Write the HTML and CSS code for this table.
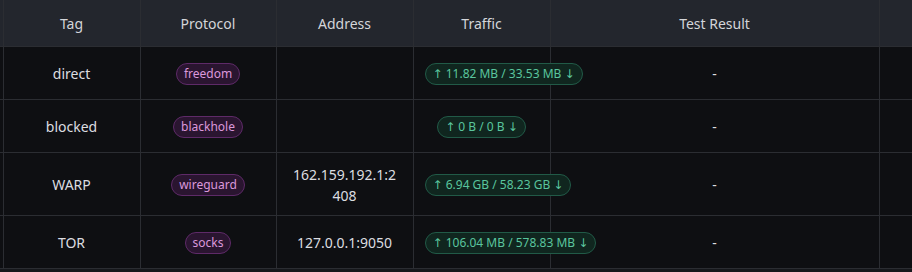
FILE: index.html
```html
<!DOCTYPE html>
<html lang="en">
<head>
<meta charset="utf-8">
<title>Outbounds</title>
<link rel="stylesheet" href="styles.css">
</head>
<body>
<div class="table-wrap">
  <table class="outbounds">
    <colgroup>
      <col class="c-edge">
      <col class="c-tag">
      <col class="c-proto">
      <col class="c-addr">
      <col class="c-traffic">
      <col class="c-test">
      <col class="c-more">
    </colgroup>
    <thead>
      <tr>
        <th></th>
        <th>Tag</th>
        <th>Protocol</th>
        <th>Address</th>
        <th>Traffic</th>
        <th>Test Result</th>
        <th></th>
      </tr>
    </thead>
    <tbody>
      <tr>
        <td></td>
        <td>direct</td>
        <td><span class="tag tag-purple">freedom</span></td>
        <td class="addr"></td>
        <td><span class="tag tag-green"><span class="arrow">↑</span> 11.82 MB / 33.53 MB <span class="arrow">↓</span></span></td>
        <td>-</td>
        <td></td>
      </tr>
      <tr>
        <td></td>
        <td>blocked</td>
        <td><span class="tag tag-purple">blackhole</span></td>
        <td class="addr"></td>
        <td><span class="tag tag-green"><span class="arrow">↑</span> 0 B / 0 B <span class="arrow">↓</span></span></td>
        <td>-</td>
        <td></td>
      </tr>
      <tr>
        <td></td>
        <td>WARP</td>
        <td><span class="tag tag-purple">wireguard</span></td>
        <td class="addr">162.159.192.1:2408</td>
        <td><span class="tag tag-green"><span class="arrow">↑</span> 6.94 GB / 58.23 GB <span class="arrow">↓</span></span></td>
        <td>-</td>
        <td></td>
      </tr>
      <tr>
        <td></td>
        <td>TOR</td>
        <td><span class="tag tag-purple">socks</span></td>
        <td class="addr">127.0.0.1:9050</td>
        <td><span class="tag tag-green"><span class="arrow">↑</span> 106.04 MB / 578.83 MB <span class="arrow">↓</span></span></td>
        <td>-</td>
        <td></td>
      </tr>
    </tbody>
  </table>
</div>
</body>
</html>
```

FILE: styles.css
```css
html, body {
  margin: 0;
  padding: 0;
  background: #16181c;
  font-family: "Noto Sans", "Open Sans", sans-serif;
  font-size: 14px;
  color: #dcdde0;
}

.table-wrap {
  width: 912px;
  overflow: hidden;
}

.outbounds {
  border-collapse: collapse;
  table-layout: fixed;
  width: 1080px;
  background: #0e0f12;
}

.c-edge { width: 3px; }
.c-tag { width: 137px; }
.c-proto { width: 136px; }
.c-addr { width: 137px; }
.c-traffic { width: 137px; }
.c-test { width: 329px; }
.c-more { width: 201px; }

.outbounds th,
.outbounds td {
  border: 1px solid #2b2d32;
  text-align: center;
  vertical-align: middle;
  line-height: 21px;
  padding: 0 11px;
}

.outbounds th:first-child,
.outbounds td:first-child {
  padding: 0;
  border-left: none;
}

.outbounds thead tr {
  height: 46px;
}

.outbounds th {
  background: #23262d;
  color: #d3d5d9;
  font-weight: 400;
  border-top: none;
  padding-top: 2px;
}

.outbounds tbody tr {
  height: 53px;
}

.outbounds td {
  padding-top: 11px;
  padding-bottom: 9px;
  white-space: nowrap;
}

.outbounds td.addr {
  white-space: normal;
  word-break: break-all;
  padding-left: 16px;
  padding-right: 16px;
}

.tag {
  display: inline-block;
  font-size: 12px;
  line-height: 18px;
  padding: 1px 7px;
  border-radius: 12px;
  border: 1px solid;
  white-space: nowrap;
}

.arrow {
  font-family: "DejaVu Sans", sans-serif;
}

.tag-purple {
  background: #2a1530;
  border-color: #5e2a68;
  color: #db98db;
}

.tag-green {
  background: #10261f;
  border-color: #215a47;
  color: #5ac59e;
}
```
